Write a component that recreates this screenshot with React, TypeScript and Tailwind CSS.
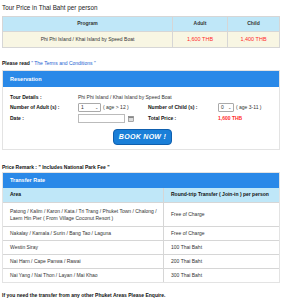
import React from 'react';

const font = { fontFamily: '"Liberation Sans", Arial, sans-serif' };

const transfers = [
  { area: 'Patong / Kalim / Karon / Kata / Tri Trang / Phuket Town / Chalong / Laem Hin Pier ( From Village Coconut Resort )', rate: 'Free of Charge' },
  { area: 'Nakalay / Kamala / Surin / Bang Tao / Laguna', rate: 'Free of Charge' },
  { area: 'Westin Siray', rate: '100 Thai Baht' },
  { area: 'Nai Harn / Cape Panwa / Rawai', rate: '200 Thai Baht' },
  { area: 'Nai Yang / Nai Thon / Layan / Mai Khao', rate: '300 Thai Baht' },
];

export default function App() {
  return (
    <div className="w-[283px] h-[301px] bg-white overflow-hidden px-[2px] text-[5px] text-[#333]" style={font}>
      {/* price table */}
      <div className="pt-[4px] text-[6.3px] text-[#222] leading-[8px]">Tour Price in Thai Baht per person</div>
      <div className="mt-[4px] w-[278px] border border-[#d6d6d6] grid grid-cols-[170px_55px_1fr]">
        <div className="h-[14px] bg-[#bfe7f8] flex items-center justify-center font-bold border-r border-[#d6d6d6]">Program</div>
        <div className="h-[14px] bg-[#bfe7f8] flex items-center justify-center font-bold border-r border-[#d6d6d6]">Adult</div>
        <div className="h-[14px] bg-[#bfe7f8] flex items-center justify-center font-bold">Child</div>
        <div className="h-[16px] bg-[#f8f6e3] flex items-center justify-center border-t border-r border-[#d6d6d6]">Phi Phi Island / Khai Island by Speed Boat</div>
        <div className="h-[16px] bg-[#f8f6e3] flex items-center justify-center border-t border-r border-[#d6d6d6] text-[#ff2a2a] text-[5.5px]">1,600 THB</div>
        <div className="h-[16px] bg-[#f8f6e3] flex items-center justify-center border-t border-[#d6d6d6] text-[#ff2a2a] text-[5.5px]">1,400 THB</div>
      </div>

      <div className="mt-[11px] font-bold text-[#111] leading-[8px]">
        Please read <span className="font-normal text-[#1c5fd1]">" The Terms and Conditions "</span>
      </div>

      {/* reservation */}
      <div className="mt-[3px] w-[278px] border border-[#e3e3e3]">
        <div className="h-[16px] bg-[#2a89e8] text-white font-bold text-[5.5px] flex items-center pl-[7px]">Reservation</div>
        <div className="pl-[7px] pr-[4px] pt-[6px] pb-[4px]">
          <div className="flex items-center h-[9px]">
            <div className="w-[68px] font-bold text-[#111]">Tour Details :</div>
            <div>Phi Phi Island / Khai Island by Speed Boat</div>
          </div>
          <div className="flex items-center h-[11px]">
            <div className="w-[68px] font-bold text-[#111]">Number of Adult (s) :</div>
            <div className="w-[23px] h-[9px] border border-[#aaa] rounded-[1px] flex items-center justify-between px-[2px]">
              <span>1</span><span className="text-[4px]">⌄</span>
            </div>
            <span className="ml-[2px] w-[45px]">( age &gt; 12 )</span>
            <div className="w-[70px] font-bold text-[#111]">Number of Child (s) :</div>
            <div className="w-[16px] h-[9px] border border-[#aaa] rounded-[1px] flex items-center justify-between px-[2px]">
              <span>0</span><span className="text-[4px]">⌄</span>
            </div>
            <span className="ml-[2px]">( age 3-11 )</span>
          </div>
          <div className="flex items-center h-[11px]">
            <div className="w-[68px] font-bold text-[#111]">Date :</div>
            <div className="w-[47px] h-[9px] border border-[#bbb]"></div>
            <svg className="ml-[3px]" width="6" height="6" viewBox="0 0 6 6">
              <rect x="0.5" y="0.5" width="5" height="5" fill="#ddd" stroke="#777" strokeWidth="0.6" />
              <rect x="0.5" y="0.5" width="5" height="1.5" fill="#888" />
            </svg>
            <div className="w-[14px]"></div>
            <div className="w-[70px] font-bold text-[#111]">Total Price :</div>
            <span className="font-bold text-[#ff2a2a]">1,600 THB</span>
          </div>
          <div className="flex justify-center mt-[5px]">
            <button className="h-[16px] px-[5px] rounded-[4px] bg-[#1a7fd8] border border-[#0f5fae] text-white font-bold italic text-[7px] tracking-[0.3px]">BOOK NOW !</button>
          </div>
        </div>
      </div>

      <div className="mt-[14px] font-bold text-[#111] leading-[6px]">Price Remark : " Includes National Park Fee "</div>

      {/* transfer rate */}
      <div className="mt-[2px] w-[278px] border border-[#e3e3e3]">
        <div className="h-[15px] bg-[#2a89e8] text-white font-bold text-[5.5px] flex items-center pl-[7px]">Transfer Rate</div>
        <div className="grid grid-cols-[161px_1fr]">
          <div className="h-[14px] bg-[#bfe7f8] flex items-center pl-[7px] font-bold text-[#111] border-r border-[#d6d6d6]">Area</div>
          <div className="h-[14px] bg-[#bfe7f8] flex items-center pl-[7px] font-bold text-[#111]">Round-trip Transfer ( Join-in ) per person</div>
          {transfers.map((t, i) => (
            <React.Fragment key={i}>
              <div className={`${i === 0 ? 'h-[24px]' : 'h-[14px]'} flex items-center pl-[7px] pr-[4px] border-t border-r border-[#d6d6d6] leading-[7px]`}>{t.area}</div>
              <div className={`${i === 0 ? 'h-[24px]' : 'h-[14px]'} flex items-center pl-[7px] border-t border-[#d6d6d6]`}>{t.rate}</div>
            </React.Fragment>
          ))}
        </div>
      </div>

      <div className="mt-[9px] font-bold text-[#111] leading-[6px]">If you need the transfer from any other Phuket Areas Please Enquire.</div>
    </div>
  );
}
